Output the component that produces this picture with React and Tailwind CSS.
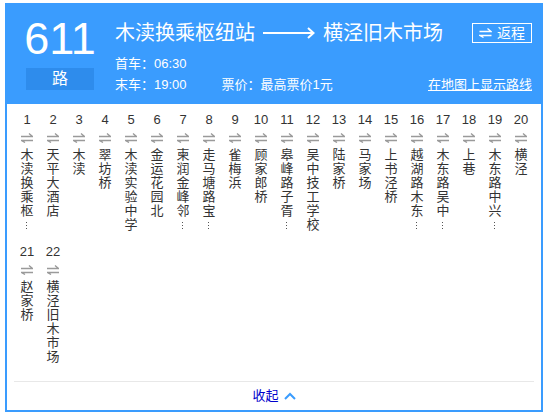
import React from "react"

const FONT = { fontFamily: '"Liberation Sans", "Noto Sans CJK SC", sans-serif' }

// names longer than 6 chars get cut to 5 + vertical ellipsis
const stops = [
  "木渎换乘枢纽站", "天平大酒店", "木渎", "翠坊桥", "木渎实验中学",
  "金运花园北", "柬润金峰邻里中心", "走马塘路宝带桥", "雀梅浜", "顾家郎桥",
  "皋峰路子胥路口", "吴中技工学校", "陆家桥", "马家场", "上书泾桥",
  "越湖路木东路口", "木东路吴中大道", "上巷", "木东路中兴路口", "横泾",
  "赵家桥", "横泾旧木市场",
]

function SwapIcon({ color = "#9a9a9a", w = 12 }) {
  // ⇌ style: top line hooked up at right, bottom line hooked down at left
  return (
    <svg width={w} height="10" viewBox="0 0 12 10" fill="none" stroke={color} strokeWidth="1.3">
      <path d="M0 3.5 H11.5 L8 0.5" />
      <path d="M12 7.5 H0.5 L4 9.5" />
    </svg>
  )
}

function Stop({ index, name }) {
  const cut = name.length > 6
  const chars = (cut ? name.slice(0, 5) : name).split("")
  return (
    <div className="flex flex-col items-center w-[26px]">
      <div className="h-[16px] leading-[16px] text-[13px] text-[#333]">{index}</div>
      <div className="h-[20px] flex items-center justify-center">
        <SwapIcon />
      </div>
      <div className="flex flex-col items-center text-[13px] leading-[14px] text-[#333]">
        {chars.map((c, i) => (
          <span key={i} className="h-[14px]">{c}</span>
        ))}
        {cut && (
          <span className="h-[14px] flex flex-col items-center justify-center gap-[2px]">
            <span className="w-[1px] h-[1px] bg-[#555]" />
            <span className="w-[1px] h-[1px] bg-[#555]" />
            <span className="w-[1px] h-[1px] bg-[#555]" />
          </span>
        )}
      </div>
    </div>
  )
}

export default function App() {
  return (
    <div className="w-[552px] h-[420px] bg-white pt-[3px] pl-[5px]" style={FONT}>
      <div className="w-[538px] border-2 border-[#3a9cfe] bg-white">

        {/* ── Header ── */}
        <div className="h-[99px] bg-[#3a9cfe] flex text-white">
          <div className="w-[72px] ml-[17px] mt-[11px] flex flex-col items-center">
            <div className="text-[45px] leading-[46px]">611</div>
            <div className="mt-[6px] w-[68px] h-[22px] bg-[#2e8cec] flex items-center justify-center text-[16px]">
              路
            </div>
          </div>

          <div className="flex-1 ml-[19px] mr-[9px] mt-[17px]">
            <div className="flex items-center justify-between h-[22px]">
              <div className="flex items-center text-[20px] leading-[22px]">
                <span>木渎换乘枢纽站</span>
                <svg className="mx-[8px]" width="52" height="12" viewBox="0 0 52 12" fill="none" stroke="white" strokeWidth="2">
                  <path d="M0 6 H50" />
                  <path d="M45 1 L50.5 6 L45 11" />
                </svg>
                <span>横泾旧木市场</span>
              </div>
              <div className="h-[20px] border border-white flex items-center gap-[5px] px-[6px] text-[14px] leading-[14px]">
                <SwapIcon color="white" w={13} />
                <span>返程</span>
              </div>
            </div>

            <div className="mt-[12px] text-[13px] leading-[15px]">首车：06:30</div>
            <div className="mt-[6px] flex items-center text-[13px] leading-[15px]">
              <span>末车：19:00</span>
              <span className="ml-[35px]">票价：最高票价1元</span>
              <span className="ml-auto underline">在地图上显示路线</span>
            </div>
          </div>
        </div>

        {/* ── Stops ── */}
        <div className="px-[7px] pt-[8px]">
          <div className="grid grid-cols-[repeat(20,26px)] gap-y-[12px] pb-[17px] items-start">
            {stops.map((name, i) => (
              <Stop key={i} index={i + 1} name={name} />
            ))}
          </div>
          <div className="h-[1px] bg-[#e8e8e8]" />
          <div className="h-[28px] flex items-center justify-center gap-[5px]">
            <span className="text-[13px] text-[#0000cc]">收起</span>
            <svg width="12" height="8" viewBox="0 0 12 8" fill="none" stroke="#3a9cfe" strokeWidth="2">
              <path d="M1 7 L6 2 L11 7" />
            </svg>
          </div>
        </div>

      </div>
    </div>
  )
}
